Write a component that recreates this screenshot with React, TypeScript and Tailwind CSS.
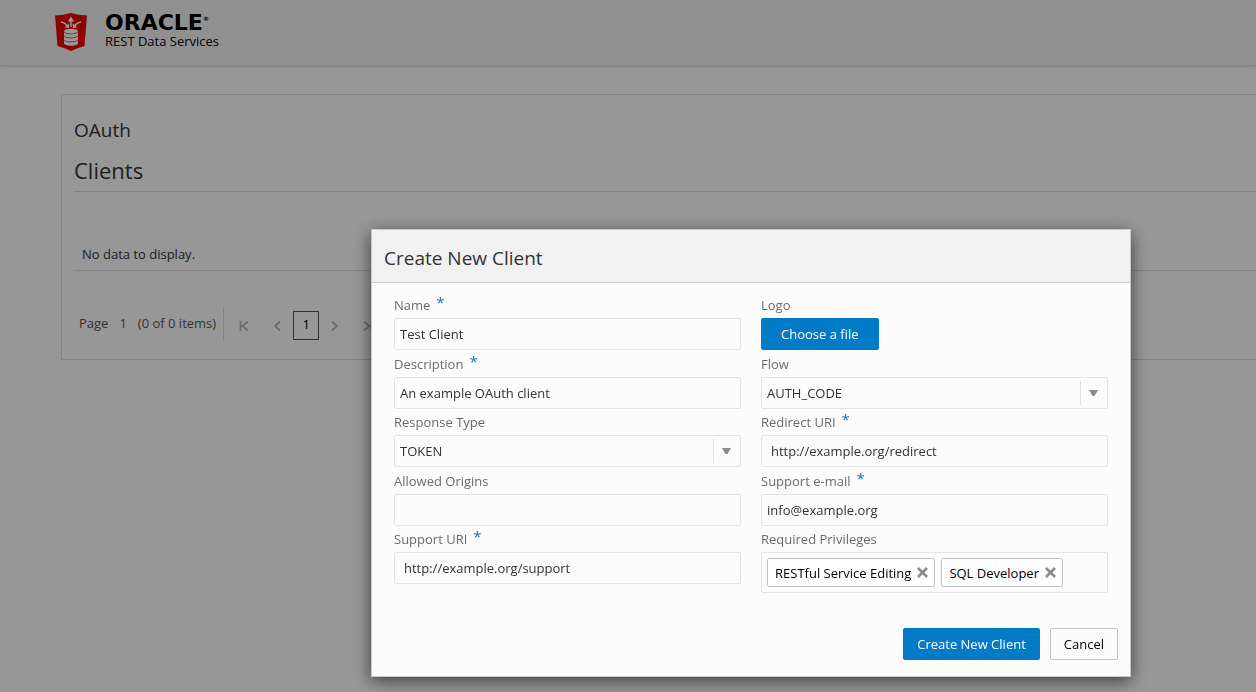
import { useState } from "react";
import type { ReactNode } from "react";

const fieldBox =
  "h-8 w-full rounded-xs border border-[#e4e4e4] bg-[#fcfcfc] text-[13px] text-[#333333] outline-none focus:border-[#0572ce]";

function Field({ id, label, required, children }: { id: string; label: string; required?: boolean; children: ReactNode }) {
  return (
    <div>
      <label htmlFor={id} className="flex h-[26px] items-center text-[13px] leading-5 text-[#6b6b6b]">
        {label}
        {required && <span className="ml-1.5 self-start text-[15px] leading-5 text-[#1a70b0]">*</span>}
      </label>
      {children}
    </div>
  );
}

function TextField({ id, label, value, required, inset }: { id: string; label: string; value: string; required?: boolean; inset?: boolean }) {
  return (
    <Field id={id} label={label} required={required}>
      <input id={id} type="text" defaultValue={value} required={required} className={`${fieldBox} block ${inset ? "px-[9px]" : "px-[5px]"}`} />
    </Field>
  );
}

function SelectField({ id, label, options }: { id: string; label: string; options: string[] }) {
  return (
    <Field id={id} label={label}>
      <div className="relative">
        <select id={id} className={`${fieldBox} block appearance-none px-[5px] pt-0.5`}>
          {options.map((o) => (
            <option key={o}>{o}</option>
          ))}
        </select>
        <span className="pointer-events-none absolute inset-y-1 right-0 flex w-7 items-center justify-center border-l border-[#dfdfdf] pr-0.5">
          <svg width="9" height="6" viewBox="0 0 9 6" aria-hidden="true">
            <path d="M0 0h9L5.500 6h-2z" fill="#8a8a8e" />
          </svg>
        </span>
      </div>
    </Field>
  );
}

function Shield() {
  return (
    <svg width="32" height="38" viewBox="0 0 32 38" aria-hidden="true">
      <path d="M0 2.500Q9 2 16 0q7 2 16 2.500L29.500 33Q22 35 16 38 10 35 2.500 33z" fill="#e80000" />
      <g fill="none" stroke="#fff" strokeWidth="1.4">
        <path d="M16 14V7M6 9q5 1 6.500 4.500M26 9q-5 1-6.500 4.500" />
      </g>
      <path d="M16 3.500l3.200 5h-6.400zM9.500 14.500l4.500.5.300-5zM22.500 14.500l-4.500.5-.3-5z" fill="#fff" />
      <path d="M9 18.500c0-3.600 14-3.600 14 0v11.500c0 3.600-14 3.600-14 0z" fill="#fff" />
      <path d="M9 18.500c0 3.200 14 3.200 14 0M9 22.500c0 3.200 14 3.200 14 0M9 26.500c0 3.200 14 3.200 14 0" fill="none" stroke="#e80000" strokeWidth="0.7" />
    </svg>
  );
}

function PageButton({ label, path }: { label: string; path: string }) {
  return (
    <button type="button" aria-label={label} className="flex h-7 w-4 items-center justify-center pt-0.5 text-[#b4b4b4]">
      <svg width="12" height="12" viewBox="0 0 12 12" fill="none" stroke="currentColor" strokeWidth="1.8" aria-hidden="true">
        <path d={path} />
      </svg>
    </button>
  );
}

function Chip({ text, onRemove }: { text: string; onRemove: () => void }) {
  return (
    <li className="flex h-[29px] items-center gap-1.5 rounded-xs border border-[#c4c4c4] bg-white pr-1.5 pl-[7px] text-[13px] text-black">
      <span className="pt-0.5">{text}</span>
      <button type="button" aria-label={`Remove ${text}`} onClick={onRemove}>
        <svg width="11" height="11" viewBox="0 0 11 11" stroke="#8a8a8a" strokeWidth="2.6" aria-hidden="true">
          <path d="M1 1l9 9M10 1l-9 9" />
        </svg>
      </button>
    </li>
  );
}

export default function App() {
  const [privileges, setPrivileges] = useState(["RESTful Service Editing", "SQL Developer"]);

  return (
    <div className="min-h-screen bg-[#fcfcfc] font-['Open_Sans',sans-serif] text-[13px] text-[#333333]">
      <header className="flex h-[66px] items-center gap-[18px] border-b border-[#dcdcdc] bg-[#f1f1f1] pb-0.5 pl-[55px] shadow-sm">
        <Shield />
        <div className="text-black">
          <div className="flex font-['DejaVu_Sans',sans-serif] text-[22px] leading-[18px] font-bold">
            ORACLE<span className="text-[6px] leading-[10px]">®</span>
          </div>
          <div className="text-[13px] leading-[18px]">REST Data Services</div>
        </div>
      </header>

      <main className="mt-7 ml-[61px] h-[266px] border border-r-0 border-[#dcdcdc] pl-3">
        <h1 className="pt-[22px] text-[19px] leading-[26px]">OAuth</h1>
        <h2 className="border-b border-[#dcdcdc] pt-3 pb-1.5 text-[22px] leading-[30px]">Clients</h2>
        <p className="border-b border-[#dcdcdc] pt-[52px] pb-1.5 pl-2 leading-5">No data to display.</p>
        <nav aria-label="Pagination" className="flex items-center pt-9 pl-[5px] text-[#555555]">
          <div className="flex h-[34px] items-center gap-[11px] border-r border-[#dcdcdc] pr-[7px]">
            <span>Page</span>
            <span>1</span>
            <span>(0 of 0 items)</span>
          </div>
          <div className="flex items-center pt-0.5 pl-3">
            <PageButton label="First page" path="M2.500 1v10M10 1.500 4.500 6l5.500 4.500M2.500 6h2.500" />
            <span className="w-[17px]" />
            <PageButton label="Previous page" path="M9 1.500 4 6l5 4.500" />
            <button type="button" aria-current="page" className="mx-2 h-[29px] w-[26px] border border-[#555555] text-black">1</button>
            <PageButton label="Next page" path="M3 1.500 8 6l-5 4.500" />
            <span className="w-[17px]" />
            <PageButton label="Last page" path="M9.500 1v10M2 1.500 7.500 6 2 10.500M7 6h2.500" />
          </div>
        </nav>
      </main>

      <div className="fixed inset-0 flex items-start justify-end overflow-auto bg-black/40 pt-[229px] pr-[125px]">
        <form
          role="dialog"
          aria-labelledby="dialog-title"
          onSubmit={(e) => e.preventDefault()}
          className="w-full max-w-[760px] border border-[#c9c9c9] bg-[#fcfcfc] shadow-[0_4px_16px_rgba(0,0,0,0.6)]"
        >
          <h2 id="dialog-title" className="border-b border-[#c9c9c9] bg-[#f1f1f1] px-3 pt-[15px] pb-[11px] text-[19px] leading-[26px]">
            Create New Client
          </h2>
          <div className="grid min-h-[310px] grid-cols-2 gap-x-5 px-[22px] pt-[9px]">
            <div className="flex flex-col justify-between pb-[9px]">
              <TextField id="name" label="Name" value="Test Client" required />
              <TextField id="description" label="Description" value="An example OAuth client" required />
              <SelectField id="response" label="Response Type" options={["TOKEN", "CODE"]} />
              <TextField id="origins" label="Allowed Origins" value="" />
              <TextField id="support" label="Support URI" value="http://example.org/support" required inset />
            </div>
            <div className="flex flex-col justify-between">
              <Field id="logo" label="Logo">
                <button id="logo" type="button" className="block h-8 rounded-xs bg-[#027bc7] px-5 pt-0.5 text-white">Choose a file</button>
              </Field>
              <SelectField id="flow" label="Flow" options={["AUTH_CODE", "IMPLICIT", "CLIENT_CRED"]} />
              <TextField id="redirect" label="Redirect URI" value="http://example.org/redirect" required inset />
              <TextField id="email" label="Support e-mail" value="info@example.org" required />
              <Field id="privileges" label="Required Privileges">
                <ul id="privileges" className="flex h-[41px] items-center gap-1.5 rounded-xs border border-[#e4e4e4] px-[5px]">
                  {privileges.map((p) => (
                    <Chip key={p} text={p} onRemove={() => setPrivileges(privileges.filter((x) => x !== p))} />
                  ))}
                </ul>
              </Field>
            </div>
          </div>
          <div className="flex justify-end gap-2.5 px-3 pt-[35px] pb-4">
            <button type="submit" className="h-8 rounded-xs bg-[#027bc7] px-3.5 pt-0.5 text-white">Create New Client</button>
            <button type="button" className="h-8 rounded-xs border border-[#c4c4c4] bg-[#fcfcfc] px-[13px] pt-0.5 text-black">Cancel</button>
          </div>
        </form>
      </div>
    </div>
  );
}
